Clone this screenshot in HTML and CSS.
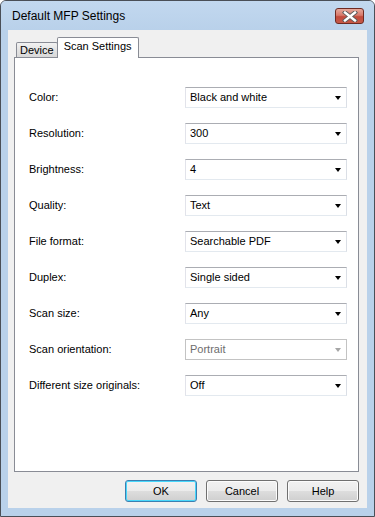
FILE: index.html
```html
<!DOCTYPE html>
<html lang="en">
<head>
  <meta charset="UTF-8">
  <title>Default MFP Settings</title>
  <link rel="stylesheet" href="styles.css">
</head>
<body>
  <div class="window">
    <div class="titlebar">
      <span class="title">Default MFP Settings</span>
      <div class="close-btn">
        <svg width="16" height="11" viewBox="0 0 16 11">
          <path d="M3 1.5 L13 9.5 M13 1.5 L3 9.5" stroke="#5a5a5a" stroke-width="4.2" stroke-linecap="square"/>
          <path d="M3 1.5 L13 9.5 M13 1.5 L3 9.5" stroke="#ffffff" stroke-width="2.4" stroke-linecap="square"/>
        </svg>
      </div>
    </div>
    <div class="client">
      <div class="tabs">
        <div class="tab">Device</div>
        <div class="tab active">Scan Settings</div>
      </div>
      <div class="panel">
        <div class="form">
          <div class="label">Color:</div>
          <div class="combo"><span>Black and white</span><i class="arrow"></i></div>

          <div class="label">Resolution:</div>
          <div class="combo"><span>300</span><i class="arrow"></i></div>

          <div class="label">Brightness:</div>
          <div class="combo"><span>4</span><i class="arrow"></i></div>

          <div class="label">Quality:</div>
          <div class="combo"><span>Text</span><i class="arrow"></i></div>

          <div class="label">File format:</div>
          <div class="combo"><span>Searchable PDF</span><i class="arrow"></i></div>

          <div class="label">Duplex:</div>
          <div class="combo"><span>Single sided</span><i class="arrow"></i></div>

          <div class="label">Scan size:</div>
          <div class="combo"><span>Any</span><i class="arrow"></i></div>

          <div class="label">Scan orientation:</div>
          <div class="combo disabled"><span>Portrait</span><i class="arrow"></i></div>

          <div class="label">Different size originals:</div>
          <div class="combo"><span>Off</span><i class="arrow"></i></div>
        </div>
      </div>
      <div class="buttons">
        <button class="btn default">OK</button>
        <button class="btn">Cancel</button>
        <button class="btn">Help</button>
      </div>
    </div>
  </div>
</body>
</html>
```

FILE: styles.css
```css
body, html {
  margin: 0;
  padding: 0;
  background: #ffffff;
  font-family: 'Liberation Sans', Arial, sans-serif;
  font-size: 11px;
  color: #000;
}

.window {
  width: 375px;
  height: 517px;
  box-sizing: border-box;
  border: 1px solid #4a4f57;
  border-radius: 6px 6px 0 0;
  background: #b9d1ea;
  padding: 0 7px 8px;
  display: flex;
  flex-direction: column;
}

.titlebar {
  height: 29px;
  display: flex;
  align-items: center;
  justify-content: space-between;
  background: linear-gradient(#c2d8ef, #b9d1ea);
  margin: 0 -7px;
  padding: 0 10px 0 11px;
  border-radius: 5px 5px 0 0;
}

.title {
  font-size: 12px;
  color: #000;
  margin-top: 1px;
}

.close-btn {
  width: 29px;
  height: 16px;
  box-sizing: border-box;
  border: 1px solid #6e2a22;
  border-radius: 3px;
  background: linear-gradient(#e6a99c 0%, #d7786a 45%, #c24a3c 55%, #c65a48 100%);
  display: flex;
  align-items: center;
  justify-content: center;
  margin-top: 1px;
}

.client {
  flex: 1;
  background: #f0f0f0;
  padding: 7px 8px 0 6px;
  display: flex;
  flex-direction: column;
}

.tabs {
  display: flex;
  align-items: flex-end;
  height: 20px;
  padding-left: 2px;
  position: relative;
  z-index: 1;
}

.tab {
  height: 15px;
  box-sizing: border-box;
  padding: 0 3px;
  border: 1px solid #898c95;
  border-bottom: none;
  border-radius: 2px 2px 0 0;
  background: linear-gradient(#f2f2f2, #e3e3e3 50%, #d9d9d9);
  line-height: 15px;
  margin-right: -1px;
}

.tab.active {
  height: 21px;
  margin-bottom: -1px;
  background: #ffffff;
  padding: 0 6px;
  line-height: 17px;
}

.panel {
  height: 415px;
  box-sizing: border-box;
  border: 1px solid #898c95;
  background: #ffffff;
  padding: 29px 10px 0 14px;
}

.form {
  display: grid;
  grid-template-columns: 156px 162px;
  grid-auto-rows: 21px;
  row-gap: 15px;
  align-items: center;
}

.label {
  margin-top: -1px;
}

.combo {
  height: 21px;
  box-sizing: border-box;
  border: 1px solid;
  border-color: #abadb3 #dbdfe6 #e3e9ef #e2e3ea;
  display: flex;
  align-items: center;
  justify-content: space-between;
  padding: 0 5px 0 4px;
  background: #fff;
}

.combo span {
  margin-top: -1px;
}

.arrow {
  width: 0;
  height: 0;
  border-left: 3.5px solid transparent;
  border-right: 3.5px solid transparent;
  border-top: 4px solid #000;
  margin-top: 1px;
}

.combo.disabled {
  border-color: #c3c3c3;
  color: #6d6d6d;
}

.combo.disabled .arrow {
  border-top-color: #a6a6a6;
}

.buttons {
  display: flex;
  justify-content: flex-end;
  gap: 9px;
  margin-top: 8px;
}

.btn {
  width: 72px;
  height: 22px;
  font-family: 'Liberation Sans', Arial, sans-serif;
  font-size: 11px;
  color: #000;
  border: 1px solid #707070;
  border-radius: 3px;
  background: linear-gradient(#f2f2f2 0%, #ebebeb 50%, #dddddd 51%, #cfcfcf 100%);
  box-shadow: inset 0 0 0 1px #fcfcfc;
  padding: 0;
}

.btn.default {
  border-color: #3c7fb1;
  box-shadow: inset 0 0 0 1px #48d7fb;
}
```
